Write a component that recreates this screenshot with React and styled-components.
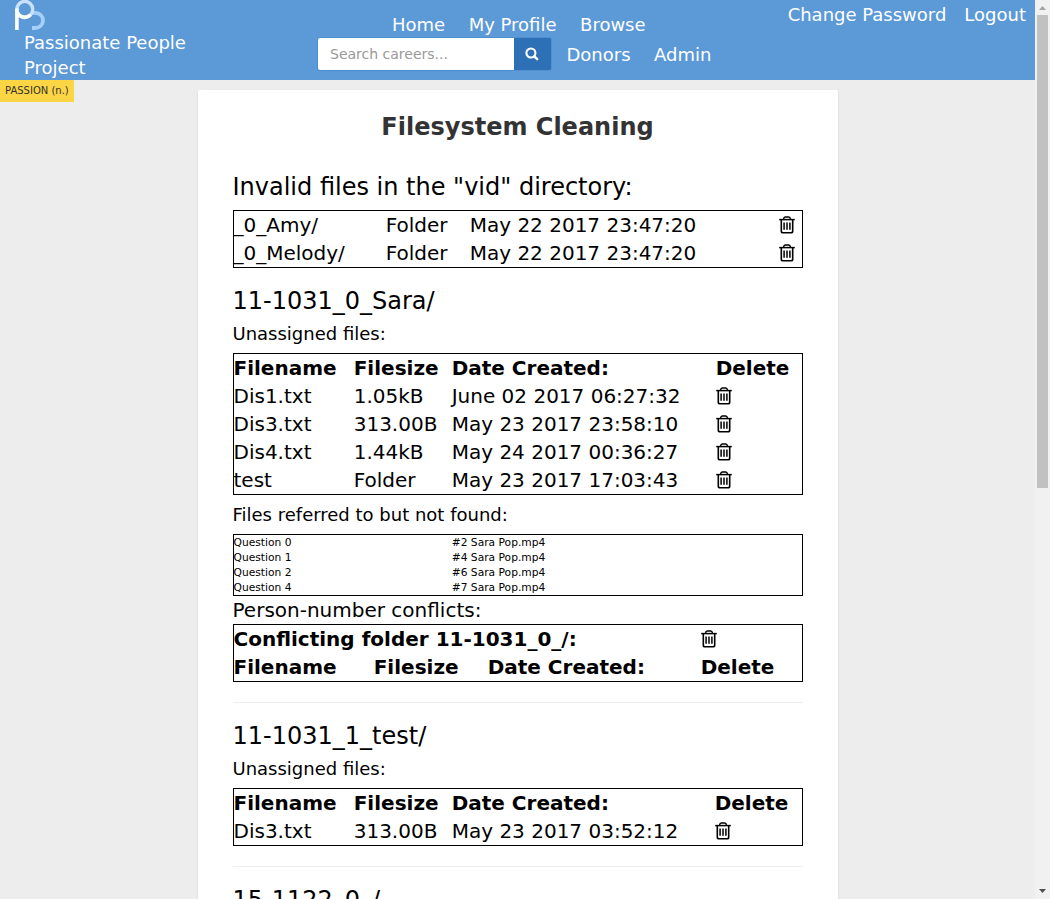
import React from "react";
import styled, { createGlobalStyle } from "styled-components";

const GlobalStyle = createGlobalStyle`
  * { box-sizing: border-box; }
  html, body { margin: 0; }
  body {
    background: #ededed;
    color: #000;
    font-family: "DejaVu Sans", sans-serif;
    font-size: 20px;
    line-height: 28px;
    overflow: hidden;
  }
`;

const Window = styled.div`
  display: flex;
  height: 899px;
  overflow: hidden;
`;

const Page = styled.div`
  flex: 1;
  min-width: 0;
  height: 100%;
  overflow: hidden;
`;

const Header = styled.header`
  display: grid;
  grid-template-columns: 318px 400px 1fr;
  height: 80px;
  background: #5b99d7;
  color: #fff;
  font-size: 18px;
  line-height: 25px;
`;

const Brand = styled.div`
  display: flex;
  flex-direction: column;
  width: 215px;
`;

const Logo = styled.svg`
  display: block;
  width: 30px;
  height: 30px;
  margin-left: 15px;
`;

const BrandName = styled.div`
  padding-left: 24px;
`;

const Nav = styled.nav`
  display: flex;
  flex-direction: column;
  padding-top: 10px;
`;

const NavRow = styled.div`
  display: flex;
  align-items: ${(p) => (p.$top ? "flex-start" : "center")};
  height: 30px;
  margin-top: ${(p) => (p.$top ? -2 : 0)}px;
  line-height: ${(p) => (p.$top ? 34 : 30)}px;
  gap: 23.5px;
  padding-left: ${(p) => p.$indent || 0}px;
`;

const NavLink = styled.a`
  color: #fff;
  white-space: nowrap;
`;

const Search = styled.form`
  display: flex;
  flex: none;
  width: 233px;
  height: 32px;
  margin-right: -8px;
  border-radius: 2px;
  overflow: hidden;
  box-shadow: 0 0 0 1px rgba(45, 112, 182, 0.25);
`;

const SearchInput = styled.input`
  width: 196px;
  padding: 0 12px;
  border: 0;
  background: #fff;
  font: 14px "DejaVu Sans", sans-serif;
  &::placeholder { color: #999; opacity: 1; }
`;

const SearchButton = styled.button`
  display: flex;
  align-items: center;
  justify-content: center;
  width: 37px;
  padding: 0 1px 0 0;
  border: 0;
  background: #2d70b6;
`;

const Account = styled.div`
  display: flex;
  justify-content: flex-end;
  gap: 18px;
  padding: 2px 9px 0 0;
`;

const Tag = styled.div`
  position: absolute;
  top: 80px;
  left: 0;
  height: 22px;
  width: 74px;
  padding-left: 5px;
  background: #fcd544;
  color: #333;
  font-size: 10px;
  line-height: 22px;
  white-space: nowrap;
`;

const Card = styled.main`
  width: 640px;
  height: 1400px;
  margin: 10px auto 0;
  padding: 24px 35px;
  background: #fff;
  border-radius: 2px;
  box-shadow: 0 1px 2px rgba(0, 0, 0, 0.15);
`;

const Title = styled.h1`
  margin: 0 0 34px;
  color: #333;
  font-size: 24px;
  line-height: 26px;
  text-align: center;
`;

const Heading = styled.h2`
  margin: 20px 0 10px;
  font-size: 24px;
  font-weight: 400;
  line-height: 26px;
`;

const Subheading = styled.h3`
  margin: 10px 0;
  font-size: 18px;
  font-weight: 400;
  line-height: 19px;
`;

const Note = styled.div`
  height: 28px;
`;

const Rule = styled.hr`
  margin: 20px 0;
  border: 0;
  border-top: 1px solid #eee;
`;

const Table = styled.table`
  width: 100%;
  table-layout: fixed;
  border: 1px solid #000;
  border-collapse: collapse;
  font-size: ${(p) => (p.$small ? "10.7px" : "20px")};
  line-height: ${(p) => (p.$small ? "15px" : "28px")};
  text-align: left;
  white-space: nowrap;
  th, td { padding: 0; height: ${(p) => (p.$small ? 15 : 28)}px; }
`;

const TrashIcon = styled.svg`
  display: block;
  width: 16px;
  height: 18px;
`;

const Scrollbar = styled.div`
  display: flex;
  flex-direction: column;
  align-items: center;
  width: 15px;
  height: 100%;
  background: #f1f1f1;
`;

const Arrow = styled.svg`
  display: block;
  flex: none;
  width: 15px;
  height: 15px;
`;

const Thumb = styled.div`
  width: 11px;
  height: 473px;
  margin-bottom: auto;
  background: #c1c1c1;
`;

const Trash = () => (
  <TrashIcon viewBox="0 0 16 18" fill="none" stroke="#000">
    <path d="M0.2 3.6H15.8" strokeWidth="1.5" />
    <path d="M4.4 3.4C4.8 1.6 5.2 1 6.2 1H9.8C10.8 1 11.2 1.6 11.6 3.4" strokeWidth="1.4" />
    <path d="M2.3 4V15Q2.3 16.8 4 16.8H12Q13.7 16.8 13.7 15V4" strokeWidth="1.6" />
    <path d="M5.1 6.4V13.8M8 6.4V13.8M10.9 6.4V13.8" strokeWidth="1.5" />
  </TrashIcon>
);

const Cols = ({ widths }) => (
  <colgroup>
    {widths.map((w, i) => <col key={i} style={{ width: w }} />)}
    <col />
  </colgroup>
);

const HeadRow = () => (
  <tr><th>Filename</th><th>Filesize</th><th>Date Created:</th><th>Delete</th></tr>
);

const FileRows = ({ files }) =>
  files.map((f) => (
    <tr key={f[0]}>
      {f.map((v, i) => <td key={i}>{v}</td>)}
      <td><Trash /></td>
    </tr>
  ));

const invalid = [
  ["_0_Amy/", "Folder", "May 22 2017 23:47:20"],
  ["_0_Melody/", "Folder", "May 22 2017 23:47:20"],
];
const saraFiles = [
  ["Dis1.txt", "1.05kB", "June 02 2017 06:27:32"],
  ["Dis3.txt", "313.00B", "May 23 2017 23:58:10"],
  ["Dis4.txt", "1.44kB", "May 24 2017 00:36:27"],
  ["test", "Folder", "May 23 2017 17:03:43"],
];
const missing = [[0, 2], [1, 4], [2, 6], [4, 7]];

export default function App() {
  return (
    <>
      <GlobalStyle />
      <Window>
        <Page>
          <Header>
            <Brand>
              <Logo viewBox="0 0 30 30" fill="none">
                <path d="M17 12.8H20.4A7.6 7.6 0 0 1 20.4 28H17" stroke="#a6d0f8" strokeWidth="3.8" />
                <circle cx="9.8" cy="9.3" r="7.9" stroke="#c9e2fb" strokeWidth="3.4" />
                <path d="M1.9 30V8.5M1.9 10.5A7.9 7.9 0 0 0 15.5 14.8" stroke="#fff" strokeWidth="3.6" />
              </Logo>
              <BrandName>Passionate People Project</BrandName>
            </Brand>
            <Nav>
              <NavRow $indent={74}>
                <NavLink>Home</NavLink>
                <NavLink>My Profile</NavLink>
                <NavLink>Browse</NavLink>
              </NavRow>
              <NavRow $top>
                <Search>
                  <SearchInput placeholder="Search careers..." />
                  <SearchButton type="button">
                    <svg width="14" height="14" viewBox="0 0 14 14" fill="none" stroke="#fff">
                      <circle cx="5.9" cy="6" r="4.5" strokeWidth="2.1" />
                      <path d="M9.3 9.3L12.2 12.2" strokeWidth="2.4" strokeLinecap="round" />
                    </svg>
                  </SearchButton>
                </Search>
                <NavLink>Donors</NavLink>
                <NavLink>Admin</NavLink>
              </NavRow>
            </Nav>
            <Account>
              <NavLink>Change Password</NavLink>
              <NavLink>Logout</NavLink>
            </Account>
          </Header>
          <Tag>PASSION (n.)</Tag>
          <Card>
            <Title>Filesystem Cleaning</Title>
            <Heading>Invalid files in the "vid" directory:</Heading>
            <Table>
              <Cols widths={[152.7, 84, 309.5]} />
              <tbody><FileRows files={invalid} /></tbody>
            </Table>
            <Heading>11-1031_0_Sara/</Heading>
            <Subheading>Unassigned files:</Subheading>
            <Table>
              <Cols widths={[120.7, 98, 264]} />
              <tbody><HeadRow /><FileRows files={saraFiles} /></tbody>
            </Table>
            <Subheading>Files referred to but not found:</Subheading>
            <Table $small>
              <Cols widths={[218.7]} />
              <tbody>
                {missing.map(([q, n]) => (
                  <tr key={q}><td>Question {q}</td><td>#{n} Sara Pop.mp4</td></tr>
                ))}
              </tbody>
            </Table>
            <Note>Person-number conflicts:</Note>
            <Table>
              <Cols widths={[140.7, 114, 213]} />
              <tbody>
                <tr><th colSpan={3}>Conflicting folder 11-1031_0_/:</th><td><Trash /></td></tr>
                <HeadRow />
              </tbody>
            </Table>
            <Rule />
            <Heading>11-1031_1_test/</Heading>
            <Subheading>Unassigned files:</Subheading>
            <Table>
              <Cols widths={[120.7, 98, 263]} />
              <tbody>
                <HeadRow />
                <FileRows files={[["Dis3.txt", "313.00B", "May 23 2017 03:52:12"]]} />
              </tbody>
            </Table>
            <Rule />
            <Heading>15-1122_0_/</Heading>
          </Card>
        </Page>
        <Scrollbar>
          <Arrow viewBox="0 0 15 15"><path d="M4 10L7.5 6L11 10Z" fill="#a3a3a3" /></Arrow>
          <Thumb />
          <Arrow viewBox="0 0 15 15"><path d="M4 5L7.5 9L11 5Z" fill="#505050" /></Arrow>
        </Scrollbar>
      </Window>
    </>
  );
}
